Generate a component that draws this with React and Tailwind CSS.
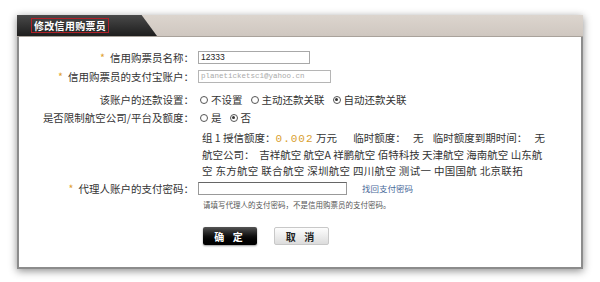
import React from 'react';

const font = { fontFamily: '"SimSun", "Noto Sans CJK SC", sans-serif' };

function Radio({ checked }) {
  return (
    <span className="inline-flex items-center justify-center w-[8px] h-[8px] rounded-full border border-[#555] mr-[3px] bg-white">
      {checked && <span className="w-[3px] h-[3px] rounded-full bg-[#333]" />}
    </span>
  );
}

function Label({ star, children }) {
  return (
    <div className="w-[179px] shrink-0 text-right pr-[4px] text-[10.5px] text-[#333] whitespace-nowrap">
      {star && <span className="text-[#e0a030] mr-[5px]">*</span>}
      {children}
    </div>
  );
}

export default function App() {
  return (
    <div className="w-[600px] h-[282px] bg-white pt-[15px] pl-[17px]" style={font}>
      <div className="w-[566px] h-[254px] flex flex-col shadow-[0_2px_8px_rgba(0,0,0,0.45)]">
        {/* header */}
        <div className="h-[22px] bg-gradient-to-b from-[#dcd5ce] to-[#cfc7c0] border-b border-[#a9a29b] flex">
          <div className="w-[118px] h-full bg-gradient-to-b from-[#4a4a4a] to-[#1e1e1e] flex items-center pl-[14px]">
            <span className="border border-[#b02028] px-[2px] h-[15px] flex items-center text-white text-[10px] font-bold tracking-[0.3px]">修改信用购票员</span>
          </div>
          <div className="w-[22px] h-full bg-gradient-to-b from-[#4a4a4a] to-[#1e1e1e] [clip-path:polygon(0_0,30%_0,100%_100%,0_100%)]" />
        </div>
        {/* body */}
        <div className="flex-1 bg-white border-x-2 border-b-2 border-[#8c8c8c] flex flex-col pt-[14px]">
          <div className="flex items-center h-[13px]">
            <Label star>信用购票员名称：</Label>
            <div className="w-[112px] h-[13px] border border-[#a8a8a8] text-[8.5px] leading-[11px] pl-[2px] text-[#222] font-['Liberation_Sans',sans-serif]">12333</div>
          </div>
          <div className="flex items-center h-[13px] mt-[6px]">
            <Label star>信用购票员的支付宝账户：</Label>
            <div className="w-[133px] h-[13px] border border-[#b5b5b5] text-[7.5px] leading-[11px] pl-[2px] text-[#aaa] font-['Liberation_Mono',monospace]">planeticketsc1@yahoo.cn</div>
          </div>
          <div className="flex items-center h-[13px] mt-[10px]">
            <Label>该账户的还款设置：</Label>
            <div className="flex items-center text-[10.5px] text-[#333] gap-[8px] pl-[2px]">
              <span className="flex items-center"><Radio />不设置</span>
              <span className="flex items-center"><Radio />主动还款关联</span>
              <span className="flex items-center"><Radio checked />自动还款关联</span>
            </div>
          </div>
          <div className="flex items-center h-[13px] mt-[5px]">
            <Label>是否限制航空公司/平台及额度：</Label>
            <div className="flex items-center text-[10.5px] text-[#333] gap-[8px] pl-[2px]">
              <span className="flex items-center"><Radio />是</span>
              <span className="flex items-center"><Radio checked />否</span>
            </div>
          </div>
          <div className="pl-[183px] mt-[6px] text-[10.5px] text-[#333] leading-[16px] whitespace-nowrap">
            <div>组 1 授信额度：<span className="text-[#d9a030] font-['Liberation_Mono',monospace] text-[11px] tracking-[1px]">0.002</span> 万元&nbsp;&nbsp;&nbsp;&nbsp;&nbsp;&nbsp; 临时额度：&nbsp;&nbsp; 无&nbsp;&nbsp;&nbsp; 临时额度到期时间：&nbsp;&nbsp; 无</div>
            <div>航空公司：&nbsp; 吉祥航空 航空A 祥鹏航空 佰特科技 天津航空 海南航空 山东航</div>
            <div className="tracking-[0.3px]">空 东方航空 联合航空 深圳航空 四川航空 测试一 中国国航 北京联拓</div>
          </div>
          <div className="flex items-center h-[13px] mt-[3px]">
            <Label star>代理人账户的支付密码：</Label>
            <div className="w-[149px] h-[13px] border border-[#999] border-t-[#666]" />
            <span className="ml-[15px] text-[8.5px] text-[#4a6a9a]">找回支付密码</span>
          </div>
          <div className="pl-[184px] mt-[4px] text-[7.5px] text-[#555]">请填写代理人的支付密码，不是信用购票员的支付密码。</div>
          <div className="pl-[184px] mt-[17px] flex gap-[17px]">
            <button className="w-[54px] h-[18px] rounded-[2px] bg-gradient-to-b from-[#555] via-[#111] to-[#000] text-white text-[10px] font-bold tracking-[3px] shadow-[0_1px_2px_rgba(0,0,0,0.4)]">确 定</button>
            <button className="w-[55px] h-[18px] rounded-[2px] border border-[#c8c8c8] bg-gradient-to-b from-[#fdfdfd] to-[#dcdcdc] text-[#222] text-[10px] font-bold tracking-[3px]">取 消</button>
          </div>
        </div>
      </div>
    </div>
  );
}
